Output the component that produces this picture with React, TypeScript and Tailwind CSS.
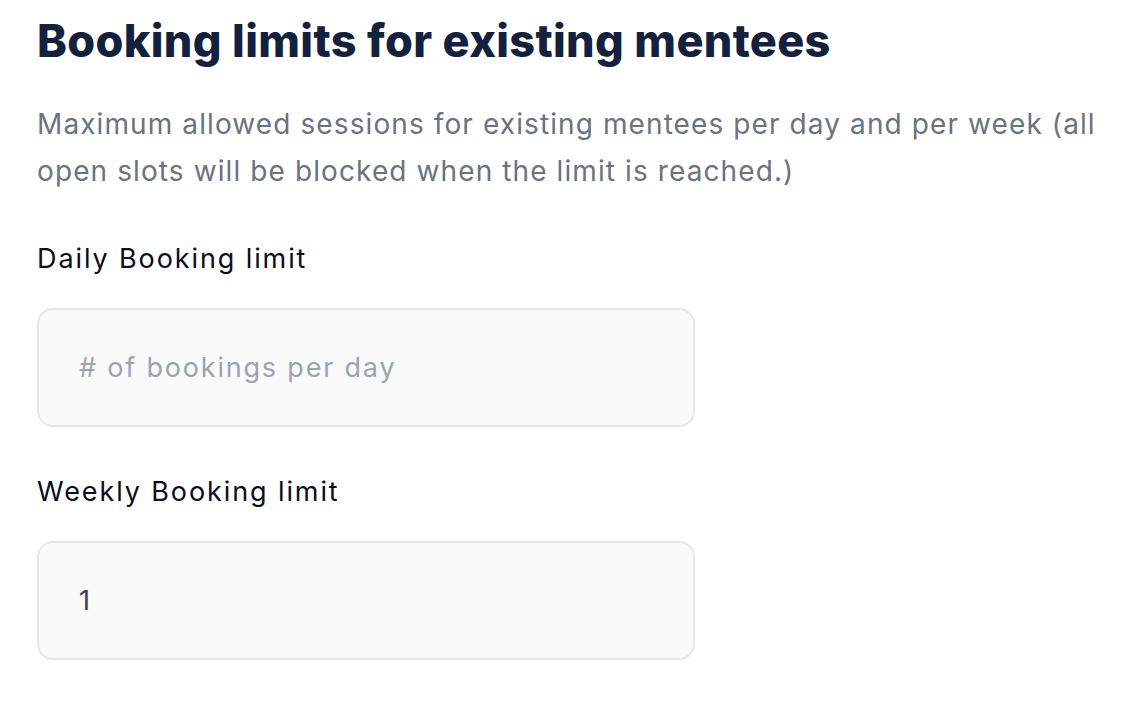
export default function App() {
  return (
    <div className="min-h-screen bg-white px-[37px] pt-[13px] font-['Inter','Liberation_Sans',sans-serif]">
      <h2 className="text-[45px] leading-[56px] font-extrabold tracking-[0.35px] text-[#13213c]">
        Booking limits for existing mentees
      </h2>

      <p className="mt-[32px] text-[28px] leading-[47px] tracking-[1.1px] text-[#6b7280]">
        Maximum allowed sessions for existing mentees per day and per week (all
        open slots will be blocked when the limit is reached.)
      </p>

      {/* Daily */}
      <div className="mt-[44px]">
        <label htmlFor="daily" className="block text-[27px] leading-[40px] tracking-[1.9px] text-[#0b0c1c]">
          Daily Booking limit
        </label>
        <input
          type="text"
          id="daily"
          name="daily"
          placeholder="# of bookings per day"
          className="mt-[29px] w-[658px] h-[119px] rounded-[16px] border-2 border-[#e5e7eb] bg-[#fafafa] px-[40px] text-[27px] tracking-[1.8px] text-[#374151] placeholder:text-[#9ca3af] outline-none"
        />
      </div>

      {/* Weekly */}
      <div className="mt-[45px]">
        <label htmlFor="weekly" className="block text-[27px] leading-[40px] tracking-[1.9px] text-[#0b0c1c]">
          Weekly Booking limit
        </label>
        <input
          type="text"
          id="weekly"
          name="weekly"
          defaultValue="1"
          className="mt-[29px] w-[658px] h-[119px] rounded-[16px] border-2 border-[#e5e7eb] bg-[#fafafa] px-[40px] text-[27px] tracking-[1.8px] text-[#374151] outline-none"
        />
      </div>
    </div>
  );
}
